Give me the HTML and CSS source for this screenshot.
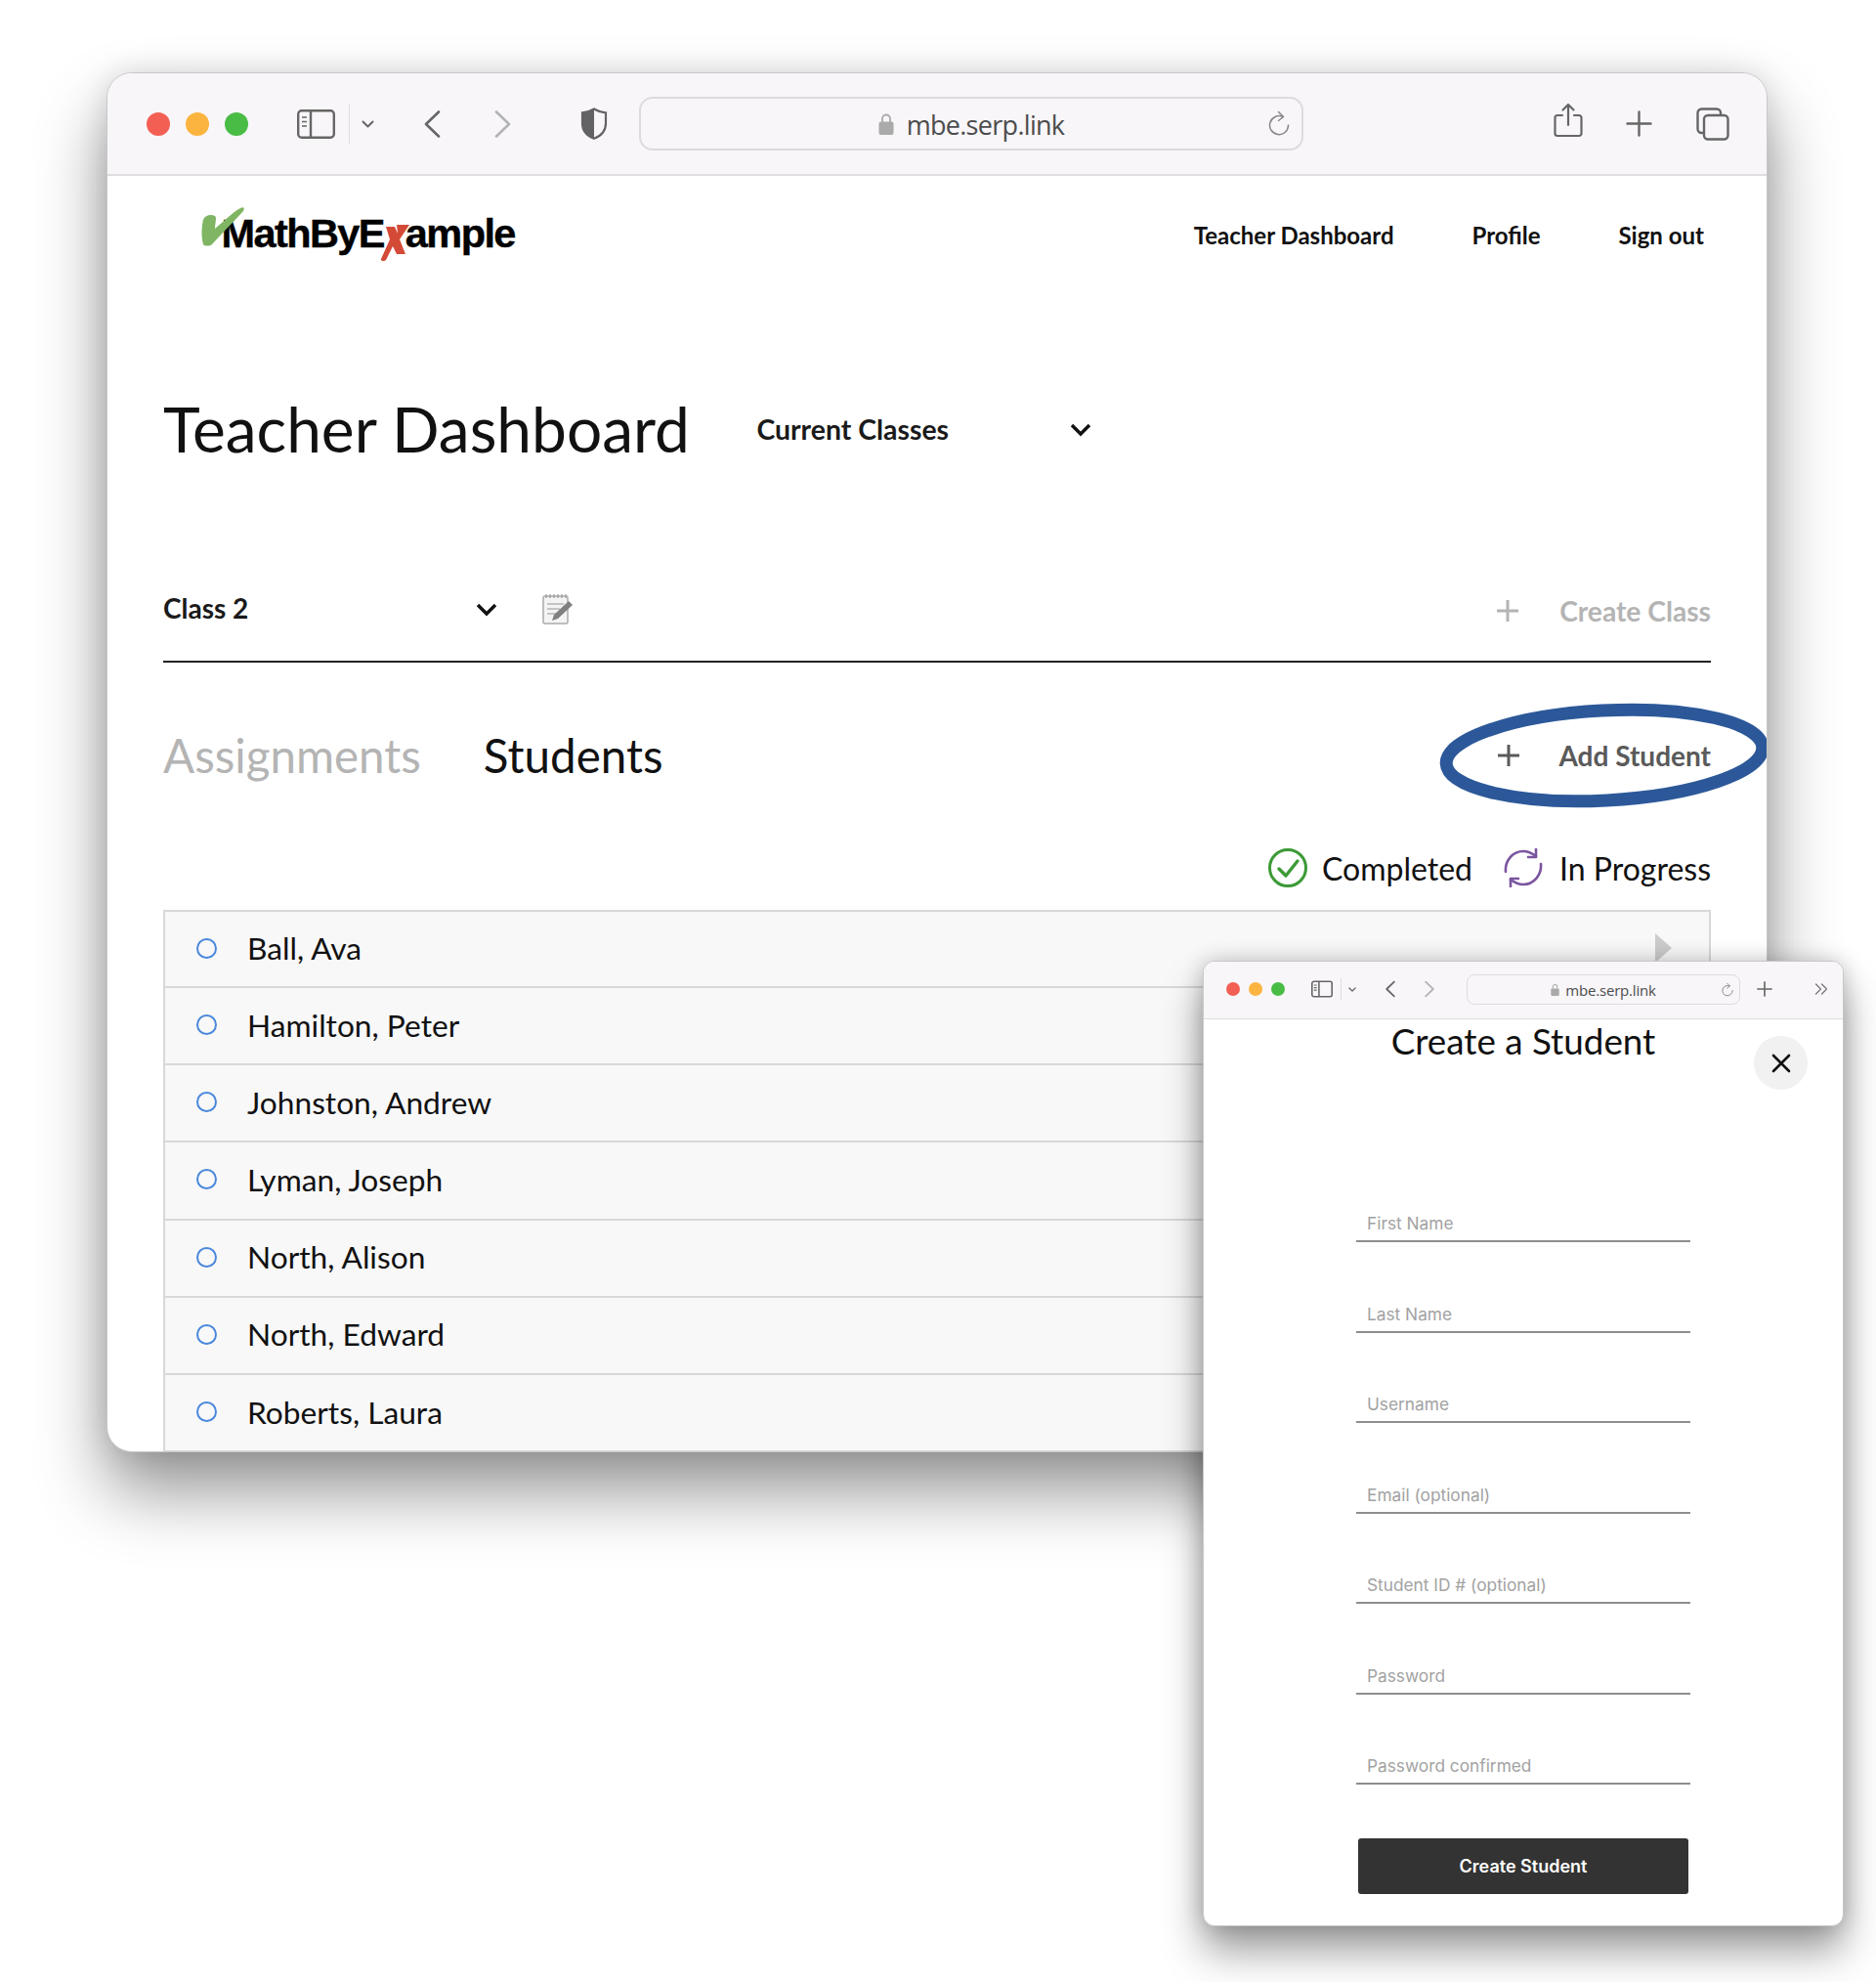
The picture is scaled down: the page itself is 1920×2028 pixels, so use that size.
FILE: index.html
```html
<!DOCTYPE html>
<html lang="en">

<head>
    <meta charset="UTF-8">
    <title>Teacher Dashboard</title>
    <link rel="stylesheet" href="styles.css">
</head>

<body>
    <div class="window main-window">
        <div class="toolbar">
            <div class="lights">
                <span class="light red"></span><span class="light yellow"></span><span class="light green"></span>
            </div>
            <svg class="tb-sidebar" viewBox="0 0 39 30" fill="none" stroke="#666" stroke-width="2.4"><rect x="1.2" y="1.2" width="36.6" height="27.6" rx="3.5"/><path d="M14 1.2v27.6"/><path d="M5 8h5M5 12.5h5M5 17h5" stroke-width="1.6"/></svg>
            <span class="tb-sep"></span>
            <svg class="tb-chev" viewBox="0 0 13 8" fill="none" stroke="#666" stroke-width="2" stroke-linecap="round" stroke-linejoin="round"><path d="M1.5 1.5l5 5 5-5"/></svg>
            <svg class="tb-back" viewBox="0 0 17 28" fill="none" stroke="#666" stroke-width="2.6" stroke-linecap="round" stroke-linejoin="round"><path d="M15 1.5L2 14l13 12.5"/></svg>
            <svg class="tb-fwd" viewBox="0 0 17 28" fill="none" stroke="#b3b3b3" stroke-width="2.6" stroke-linecap="round" stroke-linejoin="round"><path d="M2 1.5L15 14 2 26.5"/></svg>
            <svg class="tb-shield" viewBox="0 0 28 33" fill="none"><path d="M14 1.5c3.5 2.2 7.5 3.4 12 3.8v11c0 7.5-5 12.8-12 15.5C7 29.1 2 23.8 2 16.3v-11C6.5 4.9 10.5 3.7 14 1.5z" stroke="#636366" stroke-width="2.2"/><path d="M14 1.5v30.3C7 29.1 2 23.8 2 16.3v-11C6.5 4.9 10.5 3.7 14 1.5z" fill="#636366"/></svg>
            <div class="urlbar">
                <svg class="lock" viewBox="0 0 16 23"><path d="M4 10V6.5a4 4 0 0 1 8 0V10" fill="none" stroke="#aaa" stroke-width="1.8"/><rect x="0.5" y="9.5" width="15" height="13.5" rx="2" fill="#aaa"/></svg>
                <span class="url-text">mbe.serp.link</span>
                <svg class="reload" viewBox="0 0 22 28" fill="none" stroke="#888" stroke-width="1.5" stroke-linecap="round" stroke-linejoin="round"><path d="M15 6.5A9.5 9.5 0 1 0 20.5 15"/><path d="M10.5 1.5l5 5-5 4"/></svg>
            </div>
            <svg class="tb-share" viewBox="0 0 30 36" fill="none" stroke="#666" stroke-width="2.2" stroke-linecap="round" stroke-linejoin="round"><path d="M9 13H4a2.5 2.5 0 0 0-2.5 2.5v16A2.5 2.5 0 0 0 4 34h22a2.5 2.5 0 0 0 2.5-2.5v-16A2.5 2.5 0 0 0 26 13h-5"/><path d="M15 23V2M9.5 7.5L15 2l5.5 5.5"/></svg>
            <svg class="tb-plus" viewBox="0 0 27 27" fill="none" stroke="#666" stroke-width="2.4" stroke-linecap="round"><path d="M13.5 1.5v24M1.5 13.5h24"/></svg>
            <svg class="tb-tabs" viewBox="0 0 34 34" fill="none" stroke="#666" stroke-width="2.4"><path d="M7 26H5.5A4 4 0 0 1 1.5 22V5.5a4 4 0 0 1 4-4H21a4 4 0 0 1 4 4V7"/><rect x="8" y="8" width="24.5" height="24.5" rx="4"/></svg>
        </div>

        <div class="page">
            <header class="site-header">
                <div class="logo">
                    <svg class="logo-check" viewBox="0 0 44 41"><path d="M2 14C0 22 0 32 2 39c1 2 7 2 9 0C20 29 32 17 43 5c2-3 0-5-3-3-6 3-13 10-26 21 0-4 1-8 1-11 0-2-2-3-5-3-4 0-7 2-8 5z" fill="#7fb563"/></svg>
                    <span>MathByE</span><svg class="logo-x" viewBox="0 0 32 40"><path d="M18 2h13L21 17l6 15h-9l-4-8-7 14c-2 2-6 1-5-1l9-20L7 4h9l3 7z" fill="#d34a37"/></svg><span>ample</span>
                </div>
                <nav class="site-nav">
                    <a>Teacher Dashboard</a>
                    <a>Profile</a>
                    <a>Sign out</a>
                </nav>
            </header>

            <div class="title-row">
                <h1>Teacher Dashboard</h1>
                <div class="select classes-select">
                    <span>Current Classes</span>
                    <svg class="chev" viewBox="0 0 22 14" fill="none" stroke="#111" stroke-width="3.4"><path d="M2 2l9 9 9-9"/></svg>
                </div>
            </div>

            <div class="class-row">
                <div class="select class-select">
                    <span>Class 2</span>
                    <svg class="chev" viewBox="0 0 22 14" fill="none" stroke="#111" stroke-width="3.4"><path d="M2 2l9 9 9-9"/></svg>
                </div>
                <svg class="edit-icon" viewBox="0 0 32 32" fill="none"><rect x="1" y="3" width="25" height="28" rx="1.5" fill="#f4f4f4" stroke="#aaa" stroke-width="1.5"/><path d="M4 1v4M8 1v4M12 1v4M16 1v4M20 1v4M24 1v4" stroke="#999" stroke-width="1.2"/><path d="M5 11h17M5 16h13M5 21h9" stroke="#c4c4c4" stroke-width="2"/><path d="M27 8l4 4-15 14-6 2 2-6z" fill="#808080"/></svg>
                <div class="action muted create-class">
                    <svg class="action-plus" viewBox="0 0 24 24" fill="none" stroke="currentColor" stroke-width="3"><path d="M12 1v22M1 12h22"/></svg>
                    <span>Create Class</span>
                </div>
            </div>

            <div class="tabs-row">
                <span class="tab muted-tab">Assignments</span>
                <span class="tab">Students</span>
                <div class="action dark">
                    <svg class="action-plus" viewBox="0 0 24 24" fill="none" stroke="currentColor" stroke-width="3"><path d="M12 1v22M1 12h22"/></svg>
                    <span>Add Student</span>
                </div>
            </div>

            <div class="legend">
                <svg class="legend-icon" viewBox="0 0 40 40" fill="none" stroke="#3c9a36"><circle cx="20" cy="20" r="18.5" stroke-width="3"/><path d="M11 21l7 7 12-15" stroke-width="3.4" stroke-linecap="round" stroke-linejoin="round"/></svg>
                <span class="legend-text">Completed</span>
                <svg class="legend-icon progress-icon" viewBox="0 0 40 40" fill="none" stroke="#7a559f" stroke-width="2.6" stroke-linecap="round" stroke-linejoin="round"><path d="M2 24C1 13 9 3 20 3c5 0 9 2 13 5"/><path d="M33 1v8h-8"/><path d="M38 16c1 11-7 21-18 21-5 0-9-2-13-5"/><path d="M7 39v-8h8"/></svg>
                <span class="legend-text">In Progress</span>
            </div>

            <ul class="student-list">
                <li class="student"><span class="radio"></span>Ball, Ava<span class="row-arrow"></span></li>
                <li class="student"><span class="radio"></span>Hamilton, Peter</li>
                <li class="student"><span class="radio"></span>Johnston, Andrew</li>
                <li class="student"><span class="radio"></span>Lyman, Joseph</li>
                <li class="student"><span class="radio"></span>North, Alison</li>
                <li class="student"><span class="radio"></span>North, Edward</li>
                <li class="student"><span class="radio"></span>Roberts, Laura</li>
            </ul>
        </div>

        <svg class="highlight" viewBox="0 0 344 116" fill="none"><ellipse cx="172" cy="58" rx="162" ry="46" transform="rotate(-3 172 58)" stroke="#2c5899" stroke-width="13"/></svg>
    </div>

    <div class="window modal-window">
        <div class="toolbar small">
            <div class="lights">
                <span class="light red"></span><span class="light yellow"></span><span class="light green"></span>
            </div>
            <svg class="sm-sidebar" viewBox="0 0 39 30" fill="none" stroke="#666" stroke-width="2.8"><rect x="1.4" y="1.4" width="36.2" height="27.2" rx="3.5"/><path d="M14 1.4v27.2"/><path d="M5 8h5M5 12.5h5M5 17h5" stroke-width="2"/></svg>
            <span class="sm-sep"></span>
            <svg class="sm-chev" viewBox="0 0 13 8" fill="none" stroke="#666" stroke-width="2" stroke-linecap="round" stroke-linejoin="round"><path d="M1.5 1.5l5 5 5-5"/></svg>
            <svg class="sm-back" viewBox="0 0 17 28" fill="none" stroke="#666" stroke-width="3" stroke-linecap="round" stroke-linejoin="round"><path d="M15 1.5L2 14l13 12.5"/></svg>
            <svg class="sm-fwd" viewBox="0 0 17 28" fill="none" stroke="#b3b3b3" stroke-width="3" stroke-linecap="round" stroke-linejoin="round"><path d="M2 1.5L15 14 2 26.5"/></svg>
            <div class="urlbar">
                <svg class="lock" viewBox="0 0 16 23"><path d="M4 10V6.5a4 4 0 0 1 8 0V10" fill="none" stroke="#aaa" stroke-width="1.8"/><rect x="0.5" y="9.5" width="15" height="13.5" rx="2" fill="#aaa"/></svg>
                <span class="url-text">mbe.serp.link</span>
                <svg class="reload" viewBox="0 0 22 28" fill="none" stroke="#888" stroke-width="1.8" stroke-linecap="round" stroke-linejoin="round"><path d="M15 6.5A9.5 9.5 0 1 0 20.5 15"/><path d="M10.5 1.5l5 5-5 4"/></svg>
            </div>
            <svg class="sm-plus" viewBox="0 0 27 27" fill="none" stroke="#666" stroke-width="2.8" stroke-linecap="round"><path d="M13.5 1.5v24M1.5 13.5h24"/></svg>
            <svg class="sm-more" viewBox="0 0 14 12" fill="none" stroke="#777" stroke-width="1.3" stroke-linecap="round" stroke-linejoin="round"><path d="M1.5 1l5 5-5 5M7.5 1l5 5-5 5"/></svg>
        </div>

        <div class="modal-body">
            <h2>Create a Student</h2>
            <span class="close-btn"><svg viewBox="0 0 20 20" fill="none" stroke="#111" stroke-width="2.6" stroke-linecap="round"><path d="M2 2l16 16M18 2L2 18"/></svg></span>
            <form class="student-form">
                <label class="field">First Name</label>
                <label class="field">Last Name</label>
                <label class="field">Username</label>
                <label class="field">Email (optional)</label>
                <label class="field">Student ID # (optional)</label>
                <label class="field">Password</label>
                <label class="field">Password confirmed</label>
                <button class="create-btn" type="button">Create Student</button>
            </form>
        </div>
    </div>
</body>

</html>
```
FILE: styles.css
```css
html, body {
    margin: 0;
    padding: 0;
}

body {
    position: relative;
    width: 1920px;
    height: 2028px;
    overflow: hidden;
    background-color: #fff;
    font-family: Lato, sans-serif;
    color: #111;
}

/* windows */
.window {
    position: absolute;
    background-color: #fff;
    overflow: hidden;
    box-sizing: border-box;
    border: 1px solid #c8c8c8;
}

.main-window {
    left: 109px;
    top: 74px;
    width: 1700px;
    height: 1412px;
    border-radius: 26px;
    box-shadow: 0 40px 70px rgba(0, 0, 0, 0.42), 0 0 30px rgba(0, 0, 0, 0.12);
}

.modal-window {
    left: 1231px;
    top: 983px;
    width: 656px;
    height: 988px;
    border-radius: 12px;
    box-shadow: 0 26px 42px rgba(0, 0, 0, 0.38), 0 0 22px rgba(0, 0, 0, 0.2);
}

/* toolbars */
.toolbar {
    display: flex;
    align-items: center;
    height: 105px;
    box-sizing: border-box;
    padding-left: 40px;
    background-color: #f8f6f9;
    border-bottom: 2px solid #dedde0;
}

.lights {
    display: flex;
    gap: 16px;
}

.light {
    width: 24px;
    height: 24px;
    border-radius: 50%;
}

.red { background-color: #f45f54; }
.yellow { background-color: #fbb43f; }
.green { background-color: #49bc45; }

.tb-sidebar { width: 39px; height: 30px; margin-left: 50px; }
.tb-sep { width: 1px; height: 40px; background-color: #dfdfdf; margin-left: 14px; }
.tb-chev { width: 13px; height: 8px; margin-left: 12px; }
.tb-back { width: 17px; height: 28px; margin-left: 51px; }
.tb-fwd { width: 17px; height: 28px; margin-left: 55px; }
.tb-shield { width: 28px; height: 33px; margin-left: 71px; }
.tb-share { width: 30px; height: 36px; margin-left: 256px; margin-top: -8px; }
.tb-plus { width: 27px; height: 27px; margin-left: 44px; }
.tb-tabs { width: 34px; height: 34px; margin-left: 45px; }

.urlbar {
    position: relative;
    display: flex;
    align-items: center;
    justify-content: center;
    box-sizing: border-box;
    width: 680px;
    height: 55px;
    margin-left: 32px;
    border: 2px solid #dcdbde;
    border-radius: 14px;
}

.lock { width: 16px; height: 23px; margin-right: 13px; }

.url-text {
    margin-top: 2px;
    font-family: "Open Sans", sans-serif;
    font-size: 27px;
    color: #4c4c4c;
    letter-spacing: -0.7px;
}

.reload {
    position: absolute;
    right: 12px;
    top: 12px;
    width: 22px;
    height: 28px;
}

/* page header */
.page {
    padding: 0 57px;
}

.site-header {
    display: flex;
    align-items: center;
    justify-content: space-between;
    height: 126px;
}

.logo {
    position: relative;
    display: flex;
    align-items: center;
    margin-left: 59.5px;
    margin-top: -8px;
    font-family: "Liberation Sans", Arial, sans-serif;
    font-weight: 700;
    font-size: 41.5px;
    letter-spacing: -1.6px;
    -webkit-text-stroke: 0.4px #000;
    color: #000;
}

.logo-check {
    position: absolute;
    left: -21px;
    top: 1px;
    width: 44px;
    height: 41px;
}

.logo-x {
    position: relative;
    z-index: 1;
    width: 32px;
    height: 40px;
    margin: 18px -5px 0 -5px;
}

.site-nav {
    display: flex;
    gap: 80px;
    margin-top: -5px;
    margin-right: 7px;
    font-size: 24px;
    font-weight: 700;
    color: #111;
}

/* heading */
.title-row {
    display: flex;
    align-items: center;
    height: 100px;
    margin-top: 82.5px;
}

h1 {
    margin: 0;
    font-size: 64px;
    font-weight: 400;
    color: #111;
}

.select {
    display: flex;
    align-items: center;
    justify-content: space-between;
    font-size: 28px;
    font-weight: 700;
    color: #1a1a1a;
}

.chev { width: 22px; height: 14px; margin-top: 3px; }

.classes-select {
    width: 343px;
    margin-left: 68.5px;
    font-size: 28.4px;
}

.class-row {
    display: flex;
    align-items: center;
    height: 62px;
    margin-top: 102.5px;
    padding-bottom: 23px;
    border-bottom: 2px solid #222;
}

.class-select { width: 342px; }

.edit-icon {
    width: 32px;
    height: 32px;
    margin-left: 46px;
    margin-top: 2px;
}

.action {
    display: flex;
    align-items: center;
    gap: 39px;
    margin-left: auto;
    font-size: 28px;
    font-weight: 700;
}

.create-class { margin-top: 5px; gap: 41px; font-size: 28.2px; }

.action-plus { width: 24px; height: 24px; }
.muted { color: #b4b4b4; }
.dark { color: #5a5a5a; }

/* tabs */
.tabs-row {
    display: flex;
    align-items: center;
    gap: 64px;
    height: 60px;
    margin-top: 64.5px;
}

.tab {
    font-size: 47.5px;
    color: #111;
}

.muted-tab { color: #b4b4b4; }

.highlight {
    position: absolute;
    left: 1360px;
    top: 640px;
    width: 344px;
    height: 116px;
}

.legend {
    display: flex;
    align-items: center;
    justify-content: flex-end;
    height: 44px;
    margin-top: 63.5px;
    font-size: 32px;
}

.legend-icon { width: 40px; height: 40px; margin-right: 15px; }
.legend-text { color: #111; }
.progress-icon { margin-left: 32px; margin-right: 17px; }

/* students */
.student-list {
    list-style: none;
    margin: 21px 0 0 0;
    padding: 0;
    border: 2px solid #d8d8d8;
    border-bottom: none;
    background-color: #f8f8f8;
    line-height: 36px;
}

.student {
    position: relative;
    display: flex;
    align-items: center;
    box-sizing: border-box;
    height: 79.2px;
    padding: 0 0 2px 32px;
    font-size: 31.7px;
    color: #111;
    border-bottom: 2px solid #d8d8d8;
}

.student:first-child { height: 78px; }

.radio {
    box-sizing: border-box;
    width: 21px;
    height: 21px;
    margin-right: 31px;
    border: 2.5px solid #4a88dc;
    border-radius: 50%;
}

.row-arrow {
    position: absolute;
    right: 38px;
    top: 22px;
    width: 0;
    height: 0;
    border-left: 17px solid #ccc;
    border-top: 15px solid transparent;
    border-bottom: 15px solid transparent;
}

/* modal */
.toolbar.small {
    height: 59px;
    padding: 0 0 2px 23px;
    border-bottom-width: 1px;
}

.small .lights { gap: 9px; }
.small .light { width: 14px; height: 14px; }
.small .urlbar {
    width: 280px;
    height: 31px;
    margin-left: 33px;
    border-width: 1px;
    border-radius: 8px;
}
.small .lock { width: 9px; height: 13px; margin-right: 6px; }
.small .url-text { margin-top: 1px; font-size: 15px; letter-spacing: -0.2px; }
.small .reload { width: 12px; height: 16px; right: 6px; top: 7px; }

.sm-sidebar { width: 22px; height: 18px; margin-left: 27px; }
.sm-sep { width: 1px; height: 22px; background-color: #dfdfdf; margin-left: 8px; }
.sm-chev { width: 8px; height: 5px; margin-left: 7px; }
.sm-back { width: 10px; height: 18px; margin-left: 30px; }
.sm-fwd { width: 10px; height: 18px; margin-left: 30px; }
.sm-plus { width: 16px; height: 16px; margin-left: 17px; }
.sm-more { width: 14px; height: 12px; margin-left: 43px; }

.modal-body {
    position: relative;
    height: 928px;
}

h2 {
    margin: -1px 0 0 0;
    font-size: 36.8px;
    font-weight: 400;
    line-height: 46px;
    text-align: center;
    color: #111;
}

.close-btn {
    position: absolute;
    left: 563px;
    top: 18px;
    display: flex;
    align-items: center;
    justify-content: center;
    width: 55px;
    height: 55px;
    border-radius: 50%;
    background-color: #f1f1f1;
}

.close-btn svg { width: 20px; height: 20px; }

.student-form {
    display: flex;
    flex-direction: column;
    width: 342px;
    margin: 98px auto 0 auto;
    font-family: Inter, sans-serif;
}

.field {
    box-sizing: border-box;
    height: 92.5px;
    padding: 62.5px 0 0 11px;
    font-size: 17.3px;
    line-height: 22px;
    color: #a2a2a2;
    border-bottom: 2px solid #8e8e8e;
}

.field:first-child { height: 85px; padding-top: 55px; }

.create-btn {
    align-self: center;
    width: 338px;
    height: 57px;
    margin-top: 55px;
    border: none;
    border-radius: 3px;
    background-color: #333;
    color: #fff;
    font-family: Inter, sans-serif;
    font-size: 18px;
    font-weight: 600;
}
```
